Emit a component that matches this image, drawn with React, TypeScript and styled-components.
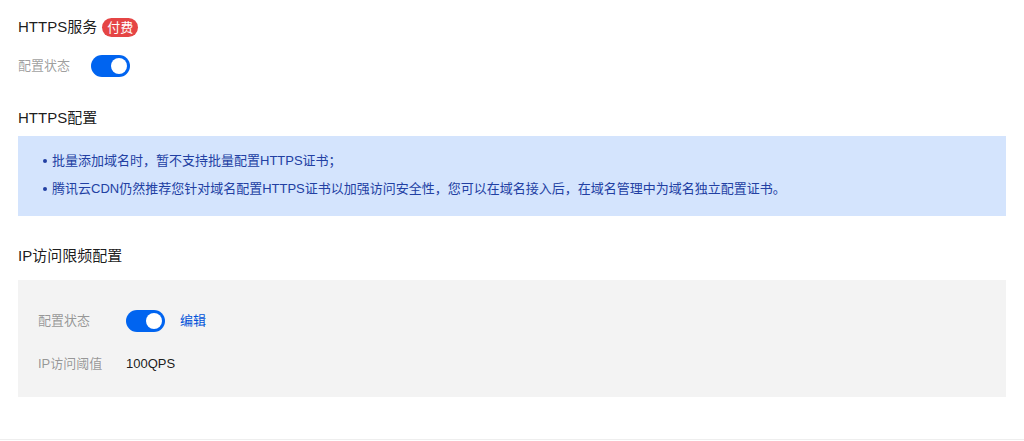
import React, { useState } from "react";
import styled, { createGlobalStyle } from "styled-components";

const GlobalStyle = createGlobalStyle`
  html, body {
    margin: 0;
    padding: 0;
    background: #fff;
    font-family: "Liberation Sans", "Noto Sans CJK SC", sans-serif;
  }
`;

const Page = styled.div`
  box-sizing: border-box;
  height: 440px;
  padding: 16px 18px 0;
  border-bottom: 1px solid #eeeeee;
`;

const Heading = styled.div<{ $top?: number; $bottom?: number }>`
  display: flex;
  align-items: center;
  gap: 5px;
  font-size: 15px;
  line-height: 22px;
  color: rgba(0, 0, 0, 0.9);
  margin-top: ${(p) => p.$top ?? 0}px;
  margin-bottom: ${(p) => p.$bottom ?? 0}px;
`;

const Badge = styled.span`
  display: inline-flex;
  align-items: center;
  justify-content: center;
  height: 19px;
  padding: 0 5px;
  border-radius: 10px;
  background: #e54545;
  color: #fff;
  font-size: 13px;
  line-height: 19px;
`;

const Row = styled.div<{ $label: number; $top?: number }>`
  display: grid;
  grid-template-columns: ${(p) => p.$label}px auto auto 1fr;
  align-items: center;
  column-gap: 15px;
  min-height: 22px;
  margin-top: ${(p) => p.$top ?? 0}px;
  font-size: 13px;
  line-height: 20px;
`;

const Label = styled.span`
  color: rgba(0, 0, 0, 0.4);
  grid-column: 1;
`;

const Value = styled.span`
  grid-column: 2 / span 2;
  color: rgba(0, 0, 0, 0.9);
`;

const Track = styled.button<{ $on: boolean }>`
  grid-column: 2;
  position: relative;
  width: 39px;
  height: 22px;
  padding: 0;
  border: none;
  border-radius: 11px;
  background: ${(p) => (p.$on ? "#0064f0" : "#ccc")};
  cursor: pointer;
`;

const Knob = styled.span<{ $on: boolean }>`
  position: absolute;
  top: 3px;
  left: ${(p) => (p.$on ? "20px" : "3px")};
  width: 16px;
  height: 16px;
  border-radius: 50%;
  background: #fff;
`;

const Link = styled.a`
  color: #0052d9;
  font-size: 13px;
  text-decoration: none;
  cursor: pointer;
`;

const Notice = styled.ul`
  margin: 0;
  padding: 15px 20px 17px 25px;
  list-style: none;
  background: #d4e4fd;
  display: flex;
  flex-direction: column;
  gap: 8px;
`;

const NoticeItem = styled.li`
  position: relative;
  padding-left: 9px;
  font-size: 13px;
  line-height: 20px;
  color: #2240a3;
  &::before {
    content: "";
    position: absolute;
    left: 0;
    top: 8px;
    width: 4px;
    height: 4px;
    border-radius: 50%;
    background: #2240a3;
  }
`;

const Panel = styled.div`
  background: #f3f3f3;
  padding: 30px 20px 22px;
`;

function Toggle({ initial = true }: { initial?: boolean }) {
  const [on, setOn] = useState(initial);
  return (
    <Track $on={on} onClick={() => setOn(!on)}>
      <Knob $on={on} />
    </Track>
  );
}

export default function App() {
  return (
    <>
      <GlobalStyle />
      <Page>
        <Heading>
          HTTPS服务<Badge>付费</Badge>
        </Heading>
        <Row $label={58} $top={17}>
          <Label>配置状态</Label>
          <Toggle />
        </Row>

        <Heading $top={30} $bottom={7}>
          HTTPS配置
        </Heading>
        <Notice>
          <NoticeItem>批量添加域名时，暂不支持批量配置HTTPS证书；</NoticeItem>
          <NoticeItem>
            腾讯云CDN仍然推荐您针对域名配置HTTPS证书以加强访问安全性，您可以在域名接入后，在域名管理中为域名独立配置证书。
          </NoticeItem>
        </Notice>

        <Heading $top={29} $bottom={13}>
          IP访问限频配置
        </Heading>
        <Panel>
          <Row $label={73}>
            <Label>配置状态</Label>
            <Toggle />
            <Link>编辑</Link>
          </Row>
          <Row $label={73} $top={21}>
            <Label>IP访问阈值</Label>
            <Value>100QPS</Value>
          </Row>
        </Panel>
      </Page>
    </>
  );
}
